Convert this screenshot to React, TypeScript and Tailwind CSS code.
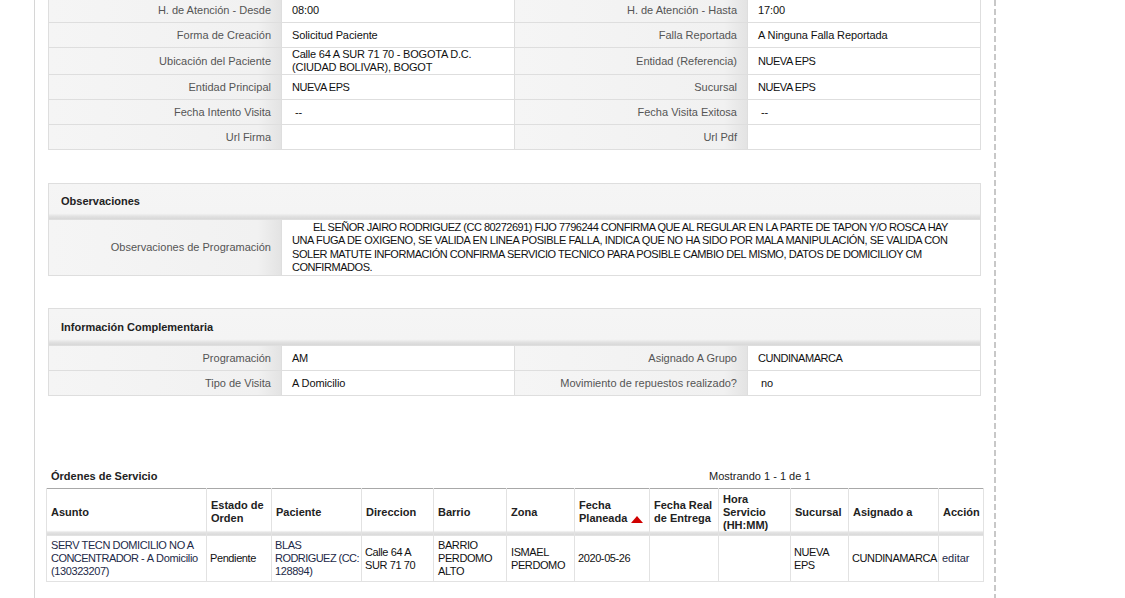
import React from 'react'

type Pair = { label: string; value: React.ReactNode }

const labelBg =
  'bg-[linear-gradient(to_right,#f5f5f5_0%,#f1f1f1_90%,#e3e3e3_100%)] text-[#555] text-right pr-[10px]'

function Row({ left, right, h = 'h-[25px]' }: { left: Pair; right: Pair; h?: string }) {
  return (
    <div className={`grid grid-cols-[233px_233px_233px_233px] ${h}`}>
      <div className={`${labelBg} flex items-center justify-end border-r border-b border-[#dedede]`}>
        {left.label}
      </div>
      <div className="flex items-center pl-[10px] border-r border-b border-[#dedede] text-[#111] tracking-[-0.1px]">
        {left.value}
      </div>
      <div className={`${labelBg} flex items-center justify-end border-r border-b border-[#dedede]`}>
        {right.label}
      </div>
      <div className="flex items-center pl-[10px] border-b border-[#dedede] text-[#111] tracking-[-0.1px]">
        {right.value}
      </div>
    </div>
  )
}

function Up({ children, t = 'tracking-[-0.45px]' }: { children: React.ReactNode; t?: string }) {
  return <span className={t}>{children}</span>
}

function PanelHeader({ title, h }: { title: string; h: string }) {
  return (
    <div
      className={`${h} flex items-center pl-[12px] font-bold text-[#222] bg-[linear-gradient(to_bottom,#f5f5f5_0%,#f4f4f4_84%,#e2e2e2_92%,#d8d8d8_100%)] border-b border-[#dedede]`}
    >
      {title}
    </div>
  )
}

const cols = [160, 65, 90, 72, 73, 68, 75, 69, 72, 58, 90, 45]

function SortUp() {
  return (
    <svg width="12" height="7" viewBox="0 0 12 7" className="inline-block ml-[4px] align-middle">
      <polygon points="6,0 12,7 0,7" fill="#d00000" />
    </svg>
  )
}

const td = 'border border-[#e2e2e2] text-[#111] tracking-[-0.4px]'

export default function App() {
  return (
    <div className="w-[1125px] h-[598px] overflow-hidden bg-white flex text-[11px] leading-[13px] font-['Liberation_Sans',Arial,sans-serif]">
      <div className="w-[34px] shrink-0" />
      <div className="w-[960px] shrink-0 border-l border-[#d6d6d6] pl-[13px] flex flex-col">
        {/* datos generales */}
        <div className="-mt-[2px] w-[933px] border-l border-r border-[#dedede]">
          <Row left={{ label: 'H. de Atención - Desde', value: '08:00' }} right={{ label: 'H. de Atención - Hasta', value: '17:00' }} />
          <Row left={{ label: 'Forma de Creación', value: 'Solicitud Paciente' }} right={{ label: 'Falla Reportada', value: 'A Ninguna Falla Reportada' }} />
          <Row
            h="h-[27px]"
            left={{
              label: 'Ubicación del Paciente',
              value: (
                <Up t="tracking-[-0.22px]">
                  Calle 64 A SUR 71 70 - BOGOTA D.C.
                  <br />
                  (CIUDAD BOLIVAR), BOGOT
                </Up>
              ),
            }}
            right={{ label: 'Entidad (Referencia)', value: <Up>NUEVA EPS</Up> }}
          />
          <Row left={{ label: 'Entidad Principal', value: <Up>NUEVA EPS</Up> }} right={{ label: 'Sucursal', value: <Up>NUEVA EPS</Up> }} />
          <Row left={{ label: 'Fecha Intento Visita', value: <span className="pl-[3px]">--</span> }} right={{ label: 'Fecha Visita Exitosa', value: <span className="pl-[3px]">--</span> }} />
          <Row left={{ label: 'Url Firma', value: '' }} right={{ label: 'Url Pdf', value: '' }} />
        </div>

        {/* observaciones */}
        <div className="mt-[33px] w-[933px] border border-[#dedede]">
          <PanelHeader title="Observaciones" h="h-[36px]" />
          <div className="grid grid-cols-[233px_698px] h-[55px] overflow-hidden">
            <div className={`${labelBg} flex items-center justify-end border-r border-[#dedede]`}>
              Observaciones de Programación
            </div>
            <div className="pl-[10px] pt-[1px] text-[#111] tracking-[-0.45px] whitespace-nowrap leading-[13.4px]">
              <span className="pl-[21px] tracking-[-0.5px]">EL SEÑOR JAIRO RODRIGUEZ (CC 80272691) FIJO 7796244 CONFIRMA QUE AL REGULAR EN LA PARTE DE TAPON Y/O ROSCA HAY</span>
              <br />
              <span className="tracking-[-0.4px]">UNA FUGA DE OXIGENO, SE VALIDA EN LINEA POSIBLE FALLA, INDICA QUE NO HA SIDO POR MALA MANIPULACIÓN, SE VALIDA CON</span>
              <br />
              SOLER MATUTE INFORMACIÓN CONFIRMA SERVICIO TECNICO PARA POSIBLE CAMBIO DEL MISMO, DATOS DE DOMICILIOY CM
              <br />
              CONFIRMADOS.
            </div>
          </div>
        </div>

        {/* informacion complementaria */}
        <div className="mt-[32px] w-[933px] border-l border-r border-t border-[#dedede]">
          <PanelHeader title="Información Complementaria" h="h-[37px]" />
          <Row left={{ label: 'Programación', value: <Up>AM</Up> }} right={{ label: 'Asignado A Grupo', value: <Up>CUNDINAMARCA</Up> }} />
          <Row left={{ label: 'Tipo de Visita', value: 'A Domicilio' }} right={{ label: 'Movimiento de repuestos realizado?', value: <span className="pl-[3px]">no</span> }} />
        </div>

        {/* ordenes de servicio */}
        <div className="mt-[72px] -ml-[2px] w-[937px]">
          <div className="flex items-center h-[16px]">
            <div className="w-[663px] pl-[5px] font-bold text-[#222]">Órdenes de Servicio</div>
            <div className="text-[#222]">Mostrando 1 - 1 de 1</div>
          </div>
          <table className="mt-[4px] table-fixed border-collapse w-[937px] border-t border-t-[#a8a8a8]">
            <colgroup>
              {cols.map((w, i) => (
                <col key={i} style={{ width: w }} />
              ))}
            </colgroup>
            <thead>
              <tr className="h-[47px] bg-[linear-gradient(to_bottom,#ffffff_0%,#ffffff_88%,#e4e4e4_92%,#d6d6d6_100%)]">
                {[
                  'Asunto',
                  <>Estado de<br />Orden</>,
                  'Paciente',
                  'Direccion',
                  'Barrio',
                  'Zona',
                  <>Fecha<br />Planeada<SortUp /></>,
                  <>Fecha Real<br />de Entrega</>,
                  <>Hora<br />Servicio<br />(HH:MM)</>,
                  'Sucursal',
                  'Asignado a',
                  'Acción',
                ].map((h, i) => (
                  <th key={i} className="border-l border-r border-[#e2e2e2] text-left align-middle font-bold text-[#222] px-[4px]">
                    {h}
                  </th>
                ))}
              </tr>
            </thead>
            <tbody>
              <tr className="h-[46px]">
                <td className={`${td} pl-[4px] pr-0 !text-[#1d2a48] whitespace-nowrap`}>
                  SERV TECN DOMICILIO NO A
                  <br />
                  <span className="tracking-[-0.55px]">CONCENTRADOR -</span> <span className="tracking-[-0.3px]">A Domicilio</span>
                  <br />
                  (130323207)
                </td>
                <td className={`${td} px-[3px] tracking-[-0.2px]`}>Pendiente</td>
                <td className={`${td} px-[3px] !text-[#1d2a48] whitespace-nowrap`}>
                  BLAS
                  <br />
                  <span className="tracking-[-0.55px]">RODRIGUEZ (CC:</span>
                  <br />
                  128894)
                </td>
                <td className={`${td} px-[3px]`}>Calle 64 A SUR 71 70</td>
                <td className={`${td} px-[4px]`}>BARRIO PERDOMO ALTO</td>
                <td className={`${td} px-[4px]`}>ISMAEL PERDOMO</td>
                <td className={`${td} px-[3px]`}>2020-05-26</td>
                <td className={td} />
                <td className={td} />
                <td className={`${td} px-[3px]`}>NUEVA EPS</td>
                <td className={`${td} px-[3px]`}>CUNDINAMARCA</td>
                <td className={`${td} px-[3px] !text-[#1d2a48] tracking-normal`}>editar</td>
              </tr>
            </tbody>
          </table>
        </div>
      </div>
      <div className="w-[2px] shrink-0 h-full bg-[repeating-linear-gradient(to_bottom,#c8c8c8_0px,#c8c8c8_6px,transparent_6px,transparent_9px)]" />
    </div>
  )
}
